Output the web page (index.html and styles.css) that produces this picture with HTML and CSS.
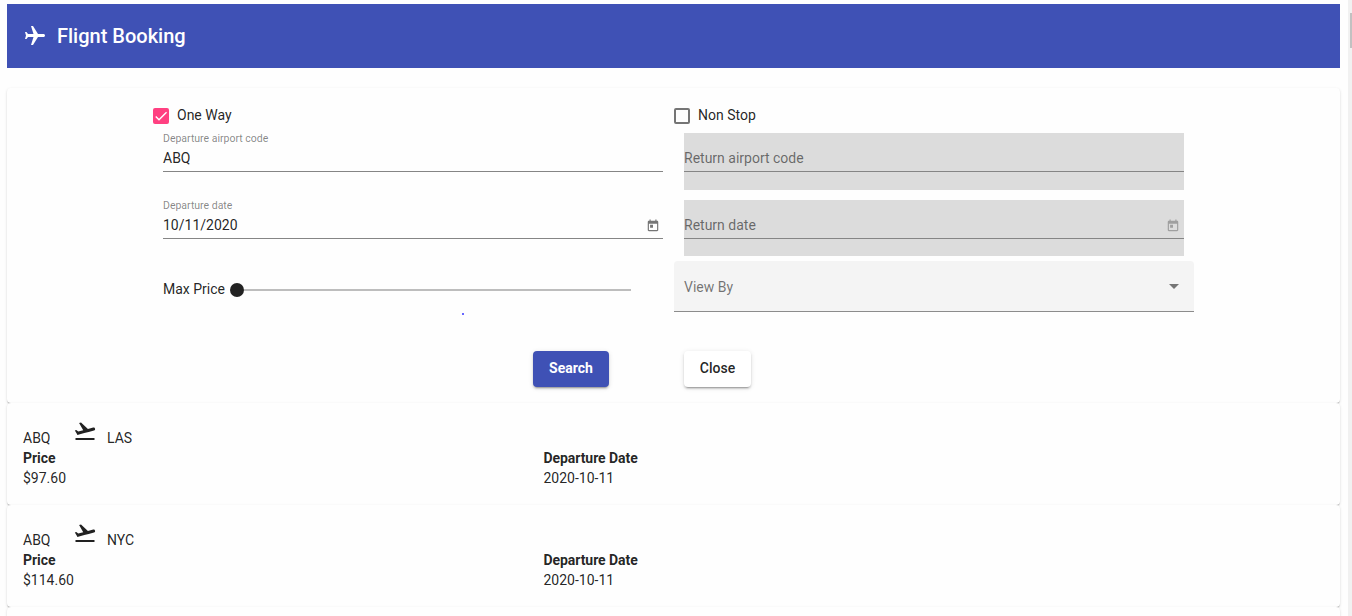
FILE: index.html
```html
<!DOCTYPE html>
<html lang="en">
<head>
<meta charset="utf-8">
<title>Flight Booking</title>
<link rel="stylesheet" href="styles.css">
</head>
<body>
<div class="page">
  <main class="content">
    <header class="toolbar">
      <svg class="toolbar-icon" viewBox="0 0 24 24"><path transform="rotate(90 12 12)" d="M21 16v-2l-8-5V3.500c0-.83-.67-1.500-1.500-1.500S10 2.670 10 3.500V9l-8 5v2l8-2.500V19l-2 1.500V22l3.500-1 3.500 1v-1.500L13 19v-5.500l8 2.500z"/></svg>
      <h1 class="title">Flignt Booking</h1>
    </header>

    <section class="card search-card">
      <div class="form-grid">
        <div class="check-row"><span class="checkbox checked"><svg viewBox="0 0 24 24"><path d="M4.100 12.700 9 17.600 20.300 6.300"/></svg></span><span class="check-label">One Way</span></div>
        <div class="check-row"><span class="checkbox"></span><span class="check-label">Non Stop</span></div>

        <div class="field">
          <div class="float-label">Departure airport code</div>
          <div class="field-line"><span>ABQ</span></div>
        </div>
        <div class="field disabled">
          <div class="float-label"></div>
          <div class="field-line"><span>Return airport code</span></div>
        </div>

        <div class="field date">
          <div class="float-label">Departure date</div>
          <div class="field-line"><span>10/11/2020</span><svg class="calendar" viewBox="0 0 24 24"><path d="M19 3h-1V1h-2v2H8V1H6v2H5c-1.110 0-1.990.9-1.990 2L3 19c0 1.100.89 2 2 2h14c1.100 0 2-.9 2-2V5c0-1.100-.9-2-2-2zm0 16H5V8h14v11zM7 10h5v5H7z"/></svg></div>
        </div>
        <div class="field date disabled">
          <div class="float-label"></div>
          <div class="field-line"><span>Return date</span><svg class="calendar" viewBox="0 0 24 24"><path d="M19 3h-1V1h-2v2H8V1H6v2H5c-1.110 0-1.990.9-1.990 2L3 19c0 1.100.89 2 2 2h14c1.100 0 2-.9 2-2V5c0-1.100-.9-2-2-2zm0 16H5V8h14v11zM7 10h5v5H7z"/></svg></div>
        </div>

        <div class="price">
          <div class="slider-row"><span class="slider-label">Max Price</span><span class="thumb"></span><span class="track"></span></div>
          <div class="dot"></div>
        </div>
        <div class="select"><span>View By</span><span class="arrow"></span></div>
      </div>
      <div class="actions">
        <button class="btn primary">Search</button>
        <button class="btn">Close</button>
      </div>
    </section>

    <section class="card result">
      <div class="route"><span class="from">ABQ</span><svg class="takeoff" viewBox="0 0 24 24"><path d="M2.500 19h19v2h-19zm19.570-9.360c-.21-.8-1.040-1.280-1.840-1.060L14.920 10l-6.900-6.430-1.930.51 4.140 7.170-4.970 1.330-1.970-1.540-1.450.39 1.820 3.160.77 1.330 1.600-.43 5.310-1.420 4.350-1.160L21 11.490c.81-.23 1.280-1.050 1.070-1.850z"/></svg><span>LAS</span></div>
      <div class="details">
        <div><b>Price</b><div>$97.60</div></div>
        <div><b>Departure Date</b><div>2020-10-11</div></div>
      </div>
    </section>

    <section class="card result">
      <div class="route"><span class="from">ABQ</span><svg class="takeoff" viewBox="0 0 24 24"><path d="M2.500 19h19v2h-19zm19.570-9.360c-.21-.8-1.040-1.280-1.840-1.060L14.920 10l-6.900-6.430-1.930.51 4.140 7.170-4.970 1.330-1.970-1.540-1.450.39 1.820 3.160.77 1.330 1.600-.43 5.310-1.420 4.350-1.160L21 11.490c.81-.23 1.280-1.050 1.070-1.850z"/></svg><span>NYC</span></div>
      <div class="details">
        <div><b>Price</b><div>$114.60</div></div>
        <div><b>Departure Date</b><div>2020-10-11</div></div>
      </div>
    </section>

    <section class="card result"></section>
  </main>
  <aside class="scrollbar"><div class="scroll-thumb"></div></aside>
</div>
</body>
</html>
```
FILE: styles.css
```css
* { box-sizing: border-box; }
body {
  margin: 0;
  background: #fefefe;
  color: rgba(0, 0, 0, .87);
  font: 400 14px/20px Roboto, "Liberation Sans", sans-serif;
}
.page { display: flex; height: 616px; overflow: hidden; }
.content { flex: 1; padding: 4px 8px 0 7px; }
.scrollbar { width: 4px; padding: 13px 0 0 2px; background: #f1f1f1; }
.scroll-thumb { height: 35px; background: #c1c1c1; }

.toolbar {
  display: flex;
  align-items: center;
  height: 64px;
  margin-bottom: 20px;
  padding: 0 16px;
  background: #3f51b5;
  color: #fff;
}
.toolbar-icon { width: 24px; height: 24px; margin-right: 10px; fill: currentColor; }
.title { margin: 0; font-size: 20px; font-weight: 500; letter-spacing: 0; }

.card {
  border-radius: 4px;
  background: #fefefe;
  box-shadow: 0 2px 1px -1px rgba(0, 0, 0, .2), 0 1px 1px 0 rgba(0, 0, 0, .14), 0 1px 3px 0 rgba(0, 0, 0, .12);
}
.search-card { height: 315px; padding: 17px 0 0 146px; }

.form-grid {
  display: grid;
  grid-template-columns: 521px 520px;
  grid-template-rows: 28px 67px 61px auto;
}
.check-row { display: flex; align-items: flex-start; height: 28px; }
.checkbox { width: 16px; height: 16px; margin: 3px 8px 0 0; border: 2px solid #757575; border-radius: 2px; }
.checkbox.checked { border: 0; background: #ff4081; }
.checkbox svg { display: block; width: 16px; height: 16px; fill: none; stroke: #fff; stroke-width: 2.1; }
.field { width: 500px; height: 57px; margin-left: 10px; }
.field.date { height: 56px; }
.disabled { background: #dcdcdc; color: rgba(0, 0, 0, .54); }
.float-label { height: 15px; font-size: 10.500px; line-height: 12px; color: rgba(0, 0, 0, .48); }
.field-line {
  display: flex;
  align-items: flex-start;
  justify-content: space-between;
  height: 24px;
  border-bottom: 1px solid #858585;
}
.calendar { width: 14px; height: 14px; margin: 4px 3px 0 0; fill: #757575; }
.disabled .calendar { margin-right: 4px; fill: #9f9f9f; }

.price { width: 510px; padding: 18px 0 0 10px; }
.slider-row { display: flex; align-items: center; }
.slider-label { width: 66.500px; }
.thumb { width: 14px; height: 14px; margin-top: 1px; border-radius: 50%; background: #222; }
.track { width: 387.500px; height: 2px; margin-top: 2px; background: #bdbdbd; }
.dot { width: 2px; height: 2px; margin: 14px 0 0 298.500px; background: #3535ff; border-radius: 50%; }
.select {
  display: flex;
  align-items: center;
  justify-content: space-between;
  height: 51px;
  padding: 1px 15px 0 10px;
  border-bottom: 1px solid #8c8c8c;
  border-radius: 4px 4px 0 0;
  background: #f4f4f4;
  color: rgba(0, 0, 0, .54);
}
.arrow { border: 5px solid transparent; border-top-color: #757575; border-bottom: 0; }

.actions { display: flex; gap: 75px; margin: 36px 0 0 380px; }
.btn {
  height: 36px;
  padding: 0 0 2px;
  border: 0;
  border-radius: 4px;
  background: #fff;
  color: rgba(0, 0, 0, .87);
  font: 500 14px Roboto, sans-serif;
  width: 67px;
  box-shadow: 0 3px 1px -2px rgba(0, 0, 0, .2), 0 2px 2px 0 rgba(0, 0, 0, .14), 0 1px 5px 0 rgba(0, 0, 0, .12);
}
.primary { width: 76px; background: #3f51b5; color: #fff; font-weight: 700; }

.result { height: 102px; padding: 16px; }
.route { display: flex; height: 29px; }
.route span { padding-top: 9px; }
.from { width: 50px; }
.takeoff { width: 24px; height: 24px; margin-right: 10px; fill: #212121; }
.details { display: grid; grid-template-columns: 520.5px 1fr; }
.details b { display: block; font-weight: 700; letter-spacing: -.06px; }
```
